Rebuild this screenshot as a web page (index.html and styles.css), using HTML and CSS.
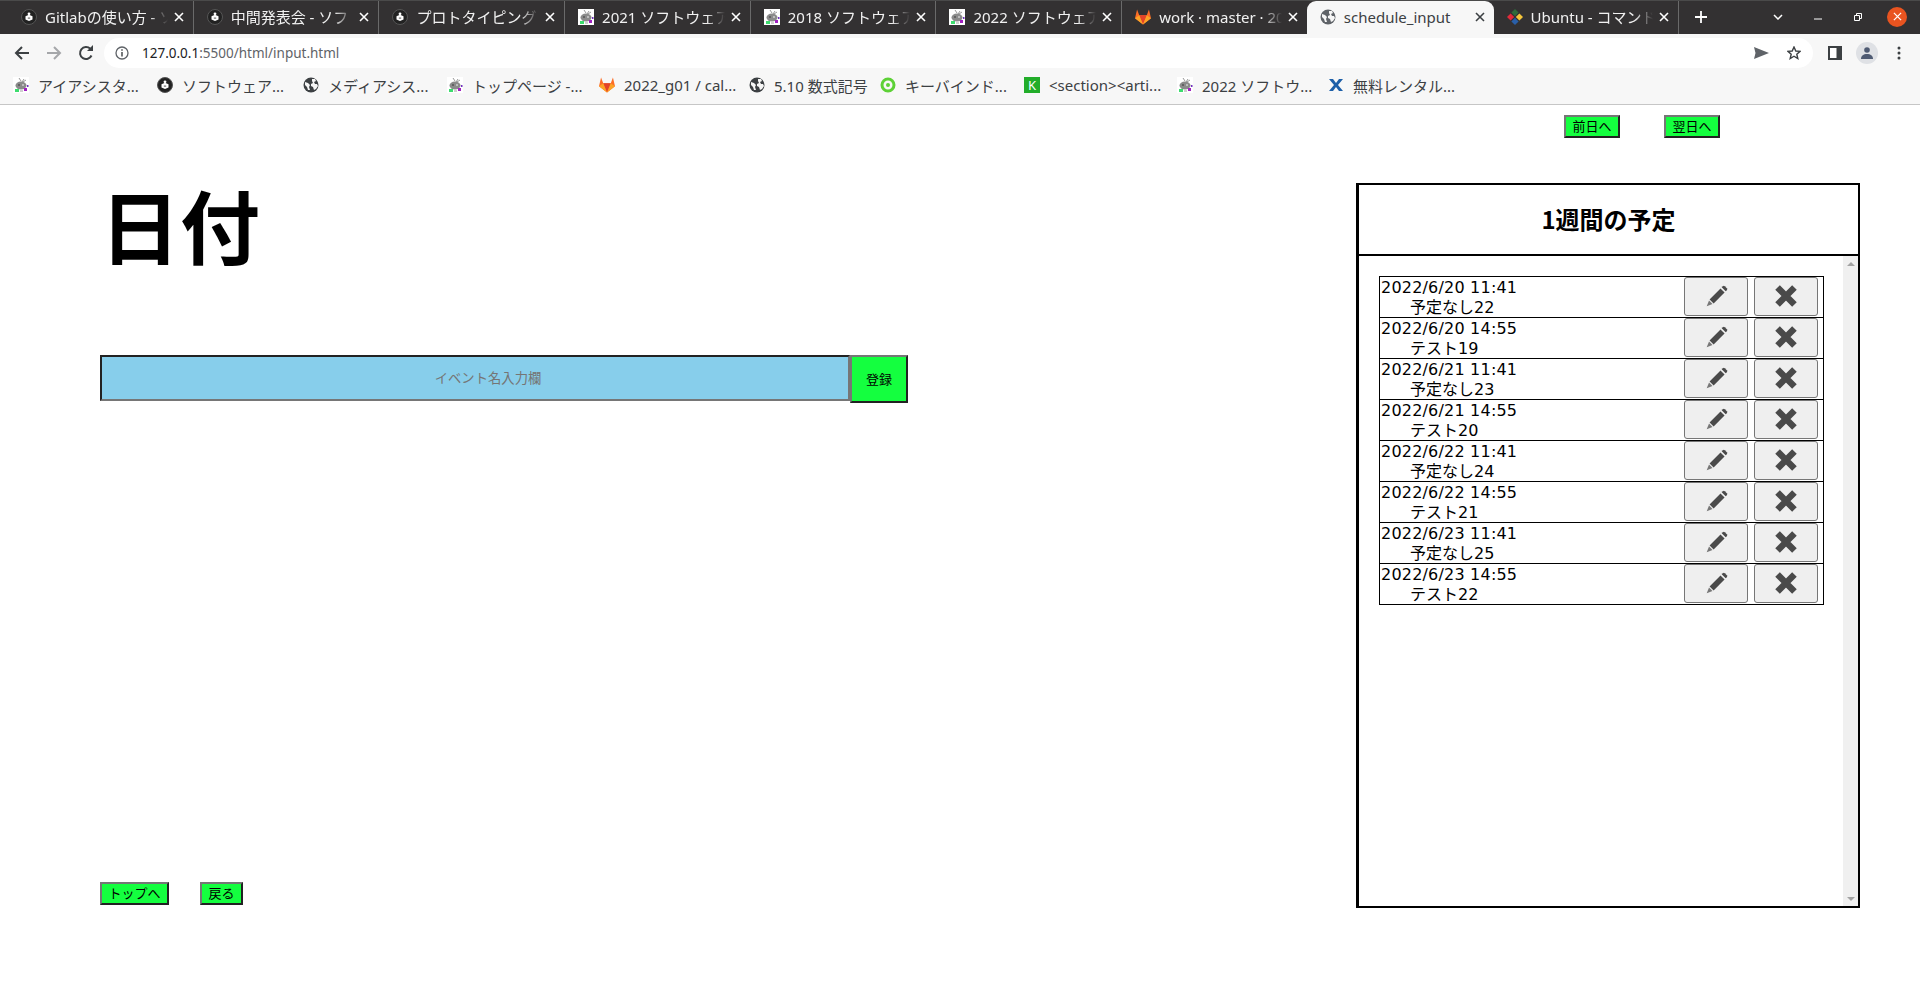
FILE: index.html
```html
<!DOCTYPE html>
<html lang="ja">
<head>
<meta charset="utf-8">
<title>schedule_input</title>
<link rel="stylesheet" href="styles.css">
</head>
<body>
<svg class="defs" width="0" height="0">
  <symbol id="i-robot" viewBox="0 0 16 16">
    <rect width="16" height="16" fill="#fff"/>
    <path d="M6 1l2 3M11 2l-2 3M13 3l-3 2" stroke="#999" stroke-width="1"/>
    <ellipse cx="8" cy="8.5" rx="5.5" ry="4" fill="#8a8a8a"/>
    <circle cx="6" cy="8" r="1" fill="#555"/><circle cx="10" cy="8" r="1" fill="#ccc"/>
    <rect x="2" y="12" width="4" height="3" fill="#3ddc6e"/>
    <rect x="7" y="13" width="3" height="2" fill="#d0d0d0"/>
    <rect x="11" y="11" width="3" height="3" fill="#a020c0"/>
    <rect x="14" y="8" width="1.5" height="2" fill="#7030c0"/>
  </symbol>
  <symbol id="i-gl" viewBox="0 0 16 16">
    <circle cx="8" cy="8" r="7.500" fill="#222" stroke="#555" stroke-width="1"/>
    <path d="M4.500 7.200L8 5.800l3.500 1.400v3.400L8 12l-3.500-1.400z" fill="#fff"/>
    <circle cx="8" cy="4.800" r="1.400" fill="#fff"/>
    <path d="M6.800 8.300h2.400v1.700H6.800z" fill="#999"/>
  </symbol>
  <symbol id="i-globe" viewBox="0 0 16 16">
    <circle cx="8" cy="8" r="7.500" fill="#3c4043"/>
    <path d="M2 5l3 1 2 2-1 2 1 3-2 0-1-3-2-2zM9 2l3 0 1 2-2 1 1 2 2 0 1 2-2 3-2 1-1-3-2-1 0-2 2-1-1-2z" fill="#f6f6f6"/>
  </symbol>
  <symbol id="i-globe-a" viewBox="0 0 16 16">
    <circle cx="8" cy="8" r="7.500" fill="#5f6368"/>
    <path d="M2 5l3 1 2 2-1 2 1 3-2 0-1-3-2-2zM9 2l3 0 1 2-2 1 1 2 2 0 1 2-2 3-2 1-1-3-2-1 0-2 2-1-1-2z" fill="#f6f6f6"/>
  </symbol>
  <symbol id="i-fox" viewBox="1 1.500 14 14">
    <path d="M8 15L1 9.500 2.800 2l1.900 5h6.600l1.900-5L15 9.500z" fill="#fc6d26"/>
    <path d="M8 15L4.700 7h6.600z" fill="#e24329"/>
    <path d="M8 15L1 9.500l3.700-2.500zM8 15l7-5.500-3.700-2.500z" fill="#fca326"/>
  </symbol>
  <symbol id="i-ring" viewBox="0 0 16 16">
    <circle cx="8" cy="8" r="6" fill="none" stroke="#5dd136" stroke-width="3"/>
    <circle cx="8" cy="8" r="2" fill="#5dd136"/>
  </symbol>
  <symbol id="i-x" viewBox="0 0 16 16">
    <path d="M1 2h4l3 4 3-4h4l-5 6 5 6h-4l-3-4-3 4H1l5-6z" fill="#1d5fa8"/>
  </symbol>
  <symbol id="i-diamond" viewBox="0 0 16 16">
    <path d="M8 0l3.600 3.600L8 7.200 4.400 3.600z" fill="#2f6b3a"/>
    <path d="M3.600 4.400L7.200 8l-3.600 3.600L0 8z" fill="#e02b3a"/>
    <path d="M12.400 4.400L16 8l-3.600 3.600L8.800 8z" fill="#f5c53a"/>
    <path d="M8 8.800l3.600 3.600L8 16l-3.600-3.600z" fill="#2a5fa8"/>
  </symbol>
  <symbol id="i-close" viewBox="0 0 10 10">
    <path d="M1 1l8 8M9 1l-8 8" stroke="currentColor" stroke-width="1.600" fill="none"/>
  </symbol>
  <symbol id="i-pencil" viewBox="0 0 20 20">
    <path fill="#4a4a4a" d="M4 12.500L13.500 3 17 6.500 7.500 16z"/>
    <path fill="#777" d="M3.500 13.500L6.500 16.500 1.500 18.500z"/>
    <path fill="#4a4a4a" d="M14.500 2L15.500 1Q16.300.3 17.200 1L19 2.800Q19.700 3.700 19 4.500L18 5.500z"/>
  </symbol>
  <symbol id="i-times" viewBox="0 0 20 20">
    <path d="M3.500 3.500L16.500 16.500M16.500 3.500L3.500 16.500" stroke="#4a4a4a" stroke-width="5" fill="none"/>
  </symbol>
</svg>

<header class="chrome">
  <div class="tabstrip">
    <div class="tab"><svg class="fav"><use href="#i-gl"/></svg><span class="tab-title">Gitlabの使い方 - ソ</span><svg class="tab-x"><use href="#i-close"/></svg></div>
    <div class="tab"><svg class="fav"><use href="#i-gl"/></svg><span class="tab-title">中間発表会 - ソフ</span><svg class="tab-x"><use href="#i-close"/></svg></div>
    <div class="tab"><svg class="fav"><use href="#i-gl"/></svg><span class="tab-title">プロトタイピング</span><svg class="tab-x"><use href="#i-close"/></svg></div>
    <div class="tab"><svg class="fav"><use href="#i-robot"/></svg><span class="tab-title">2021 ソフトウェア</span><svg class="tab-x"><use href="#i-close"/></svg></div>
    <div class="tab"><svg class="fav"><use href="#i-robot"/></svg><span class="tab-title">2018 ソフトウェア</span><svg class="tab-x"><use href="#i-close"/></svg></div>
    <div class="tab"><svg class="fav"><use href="#i-robot"/></svg><span class="tab-title">2022 ソフトウェア</span><svg class="tab-x"><use href="#i-close"/></svg></div>
    <div class="tab tab-nosep"><svg class="fav"><use href="#i-fox"/></svg><span class="tab-title">work · master · 20</span><svg class="tab-x"><use href="#i-close"/></svg></div>
    <div class="tab tab-active"><svg class="fav"><use href="#i-globe-a"/></svg><span class="tab-title">schedule_input</span><svg class="tab-x"><use href="#i-close"/></svg></div>
    <div class="tab"><svg class="fav"><use href="#i-diamond"/></svg><span class="tab-title">Ubuntu - コマンド</span><svg class="tab-x"><use href="#i-close"/></svg></div>
    <svg class="newtab" viewBox="0 0 12 12"><path d="M6 0v12M0 6h12" stroke="#fff" stroke-width="1.800"/></svg>
    <div class="winctl">
      <svg class="wc wc-chev" viewBox="0 0 10 6"><path d="M1 1l4 4 4-4" stroke="#fff" stroke-width="1.500" fill="none"/></svg>
      <svg class="wc wc-min" viewBox="0 0 8 2"><path d="M0 1h8" stroke="#fff" stroke-width="1"/></svg>
      <svg class="wc wc-max" viewBox="0 0 8 8"><path d="M.5 2.500h5v5h-5zM2.500 2.500v-2h5v5h-2" stroke="#fff" fill="none"/></svg>
      <span class="wc-close"><svg class="wc-close-x" viewBox="0 0 10 10"><path d="M1 1l8 8M9 1l-8 8" stroke="#fff" stroke-width="1.400"/></svg></span>
    </div>
  </div>
  <div class="toolbar">
    <svg class="nav-ic" viewBox="0 0 16 16"><path d="M15 8H2M8 2L2 8l6 6" stroke="#3c4043" stroke-width="2" fill="none"/></svg>
    <svg class="nav-ic" viewBox="0 0 16 16"><path d="M1 8h13M8 2l6 6-6 6" stroke="#a5a7aa" stroke-width="2" fill="none"/></svg>
    <svg class="nav-ic" viewBox="0 0 16 16"><path d="M13.500 10.500A6 6 0 1 1 12.300 3.800" stroke="#3c4043" stroke-width="2" fill="none"/><path d="M9 6h6V0z" fill="#3c4043"/></svg>
    <div class="omnibox">
      <svg class="info" viewBox="0 0 14 14"><circle cx="7" cy="7" r="6" fill="none" stroke="#5f6368" stroke-width="1.300"/><path d="M7 6v4.500M7 3.200v1.600" stroke="#3c4043" stroke-width="1.400"/></svg>
      <span class="url"><span class="url-host">127.0.0.1</span>:5500/html/input.html</span>
      <span class="omni-end">
        <svg class="send" viewBox="0 0 15 12"><path d="M0 0l15 6-15 6 1.500-6z" fill="#5f6368"/></svg>
        <svg class="star" viewBox="0 0 14 14"><path d="M7 1l1.800 4 4.200.4-3.200 2.800 1 4.300L7 10.200 3.200 12.500l1-4.300L1 5.400 5.200 5z" fill="none" stroke="#3c4043" stroke-width="1.400"/></svg>
      </span>
    </div>
    <svg class="side" viewBox="0 0 14 14"><path d="M0 0h14v14H0z" fill="#3c4043"/><path d="M2 2h6.500v10H2z" fill="#fff"/></svg>
    <span class="avatar"><svg class="avatar-ic" viewBox="0 0 12 12"><circle cx="6" cy="3" r="2.800" fill="#4f5b73"/><path d="M0 12c0-3.500 2.500-5 6-5s6 1.500 6 5z" fill="#4f5b73"/></svg></span>
    <svg class="dots" viewBox="0 0 4 14"><circle cx="2" cy="2" r="1.500" fill="#3c4043"/><circle cx="2" cy="7" r="1.500" fill="#3c4043"/><circle cx="2" cy="12" r="1.500" fill="#3c4043"/></svg>
  </div>
  <div class="bookmarks">
    <span class="bm"><svg class="fav"><use href="#i-robot"/></svg>アイアシスタ...</span>
    <span class="bm"><svg class="fav"><use href="#i-gl"/></svg>ソフトウェア...</span>
    <span class="bm"><svg class="fav"><use href="#i-globe"/></svg>メディアシス...</span>
    <span class="bm"><svg class="fav"><use href="#i-robot"/></svg>トップページ -...</span>
    <span class="bm"><svg class="fav"><use href="#i-fox"/></svg>2022_g01 / cal...</span>
    <span class="bm"><svg class="fav"><use href="#i-globe"/></svg>5.10 数式記号</span>
    <span class="bm"><svg class="fav"><use href="#i-ring"/></svg>キーバインド...</span>
    <span class="bm"><span class="k-ic">K</span>&lt;section&gt;&lt;arti...</span>
    <span class="bm"><svg class="fav"><use href="#i-robot"/></svg>2022 ソフトウ...</span>
    <span class="bm"><svg class="fav"><use href="#i-x"/></svg>無料レンタル...</span>
  </div>
</header>

<main class="page">
  <section class="left">
    <h1 class="date">日付</h1>
    <form class="event-form">
      <input class="event-input" type="text" placeholder="イベント名入力欄">
      <button class="btn btn-submit" type="button">登録</button>
    </form>
    <div class="bottom-nav">
      <button class="btn" type="button">トップへ</button>
      <button class="btn" type="button">戻る</button>
    </div>
  </section>
  <section class="right">
    <div class="day-nav">
      <button class="btn" type="button">前日へ</button>
      <button class="btn" type="button">翌日へ</button>
    </div>
    <div class="panel">
      <h2 class="panel-title">1週間の予定</h2>
      <div class="panel-body">
        <div class="panel-scroll">
          <ul class="events">
            <li class="event"><p class="event-text"><span class="event-time">2022/6/20 11:41</span><span class="event-name">予定なし22</span></p><button class="icon-btn" type="button"><svg class="pencil"><use href="#i-pencil"/></svg></button><button class="icon-btn" type="button"><svg class="times"><use href="#i-times"/></svg></button></li>
            <li class="event"><p class="event-text"><span class="event-time">2022/6/20 14:55</span><span class="event-name">テスト19</span></p><button class="icon-btn" type="button"><svg class="pencil"><use href="#i-pencil"/></svg></button><button class="icon-btn" type="button"><svg class="times"><use href="#i-times"/></svg></button></li>
            <li class="event"><p class="event-text"><span class="event-time">2022/6/21 11:41</span><span class="event-name">予定なし23</span></p><button class="icon-btn" type="button"><svg class="pencil"><use href="#i-pencil"/></svg></button><button class="icon-btn" type="button"><svg class="times"><use href="#i-times"/></svg></button></li>
            <li class="event"><p class="event-text"><span class="event-time">2022/6/21 14:55</span><span class="event-name">テスト20</span></p><button class="icon-btn" type="button"><svg class="pencil"><use href="#i-pencil"/></svg></button><button class="icon-btn" type="button"><svg class="times"><use href="#i-times"/></svg></button></li>
            <li class="event"><p class="event-text"><span class="event-time">2022/6/22 11:41</span><span class="event-name">予定なし24</span></p><button class="icon-btn" type="button"><svg class="pencil"><use href="#i-pencil"/></svg></button><button class="icon-btn" type="button"><svg class="times"><use href="#i-times"/></svg></button></li>
            <li class="event"><p class="event-text"><span class="event-time">2022/6/22 14:55</span><span class="event-name">テスト21</span></p><button class="icon-btn" type="button"><svg class="pencil"><use href="#i-pencil"/></svg></button><button class="icon-btn" type="button"><svg class="times"><use href="#i-times"/></svg></button></li>
            <li class="event"><p class="event-text"><span class="event-time">2022/6/23 11:41</span><span class="event-name">予定なし25</span></p><button class="icon-btn" type="button"><svg class="pencil"><use href="#i-pencil"/></svg></button><button class="icon-btn" type="button"><svg class="times"><use href="#i-times"/></svg></button></li>
            <li class="event"><p class="event-text"><span class="event-time">2022/6/23 14:55</span><span class="event-name">テスト22</span></p><button class="icon-btn" type="button"><svg class="pencil"><use href="#i-pencil"/></svg></button><button class="icon-btn" type="button"><svg class="times"><use href="#i-times"/></svg></button></li>
          </ul>
        </div>
        <div class="scrollbar"><span class="arrow-up"></span><span class="arrow-down"></span></div>
      </div>
    </div>
  </section>
</main>
</body>
</html>
```
FILE: styles.css
```css
* { box-sizing: border-box; }
html, body { margin: 0; padding: 0; height: 100%; }
body {
  background: #fff;
  color: #000;
  font-family: "DejaVu Sans", "Noto Sans CJK JP", sans-serif;
  overflow: hidden;
}
.defs { display: block; height: 0; }

/* browser chrome */
.chrome { font-family: "Noto Sans", "Noto Sans CJK JP", sans-serif; font-size: 15px; }
.tabstrip {
  display: flex;
  align-items: stretch;
  height: 34px;
  padding-left: 8px;
  background: #333132;
  border-top: 1px solid #4a4a4a;
}
.tab {
  flex: 0 0 185.7px;
  min-width: 0;
  display: flex;
  align-items: center;
  padding: 0 6px 2px 13px;
  color: #f1f1f1;
  border-right: 1px solid #6a6a6a;
}
.tab-nosep { border-right-color: transparent; }
.tab-active {
  background: #f7f7f7;
  color: #3c4043;
  border-radius: 9px 9px 0 0;
  border-right: 0;
  margin-left: -1px;
  flex-basis: 186.7px;
}
.fav { flex: none; width: 16px; height: 16px; }
.tab-title {
  flex: 1;
  min-width: 0;
  margin-left: 8px;
  white-space: nowrap;
  overflow: hidden;
  -webkit-mask-image: linear-gradient(90deg, #000 85%, transparent 100%);
  mask-image: linear-gradient(90deg, #000 85%, transparent 100%);
}
.tab-active .tab-title { -webkit-mask-image: none; mask-image: none; }
.tab-x { flex: none; width: 10px; height: 10px; margin-left: 6px; margin-right: 3px; color: #fff; }
.tab-active .tab-x { color: #3c4043; }
.newtab { flex: none; width: 12px; height: 12px; align-self: center; margin: 0 0 2px 16px; }
.winctl { flex: 1; display: flex; align-items: center; justify-content: flex-end; padding: 0 13px 2px 0; }
.wc { display: block; }
.wc-chev { width: 10px; height: 6px; margin-right: 31px; }
.wc-min { width: 8px; height: 2px; margin-right: 32px; margin-top: 5px; }
.wc-max { width: 8px; height: 8px; margin-right: 25px; }
.wc-close {
  display: flex;
  align-items: center;
  justify-content: center;
  width: 20px;
  height: 20px;
  border-radius: 50%;
  background: #e95420;
}
.wc-close-x { width: 9px; height: 9px; }

.toolbar {
  display: flex;
  align-items: center;
  height: 34px;
  padding: 4px 19px 0 14px;
  background: #f7f7f7;
}
.nav-ic { flex: none; width: 16px; height: 16px; margin-right: 16px; }
.omnibox {
  flex: 1;
  display: flex;
  align-items: center;
  height: 30px;
  margin-left: -6px;
  padding: 0 12px 0 11px;
  background: #fff;
  border-radius: 15px;
}
.info { width: 14px; height: 14px; margin-right: 13px; flex: none; }
.url { color: #5f6368; font-size: 13.5px; }
.url-host { color: #202124; }
.omni-end { margin-left: auto; display: flex; align-items: center; gap: 18px; }
.send { width: 15px; height: 12px; }
.star { width: 14px; height: 14px; }
.side { flex: none; width: 14px; height: 14px; margin-left: 15px; }
.avatar {
  flex: none;
  display: flex;
  align-items: center;
  justify-content: center;
  width: 22px;
  height: 22px;
  margin-left: 14px;
  border-radius: 50%;
  background: #dfe1e5;
}
.avatar-ic { width: 12px; height: 12px; }
.dots { flex: none; width: 4px; height: 14px; margin-left: 19px; }

.bookmarks {
  display: grid;
  grid-template-columns: 144px 146px 144px 152px 150px 131px 144px 153px 151px auto;
  align-items: center;
  height: 37px;
  padding: 0 0 2px 13px;
  background: #f7f7f7;
  border-bottom: 1px solid #c6c6c6;
  color: #3c4043;
}
.bm { display: flex; align-items: center; gap: 9px; white-space: nowrap; }
.k-ic {
  display: inline-flex;
  align-items: center;
  justify-content: center;
  width: 16px;
  height: 16px;
  background: #22ad2a;
  color: #fff;
  font-size: 13px;
}

/* page */
.page {
  display: grid;
  grid-template-columns: 1fr 504px;
  padding: 10px 60px 0 100px;
}
.left { display: flex; flex-direction: column; align-items: flex-start; }
.date {
  margin: 50px 0 0;
  font-family: "Noto Sans CJK JP", sans-serif;
  font-size: 80px;
  font-weight: 700;
  line-height: 116px;
}
.event-form { display: flex; align-items: flex-start; margin-top: 74px; }
.event-input {
  width: 750px;
  height: 46px;
  padding: 0 0 2px 26px;
  border: 2px solid;
  border-color: #222 #767676 #767676 #222;
  background: #87ceeb;
  font-family: "Noto Sans CJK JP", sans-serif;
  font-size: 13.33px;
  text-align: center;
  outline: 0;
}
.event-input::placeholder { color: #757575; opacity: 1; }
.btn {
  display: block;
  height: 23px;
  padding: 0 6.5px 2px;
  border: 2px solid;
  border-color: #767676 #222 #222 #767676;
  background: #14ff3f;
  color: #000;
  font-family: "Noto Sans CJK JP", sans-serif;
  font-size: 13px;
  line-height: 1;
}
.btn-submit { width: 58px; height: 48px; padding: 0 0 2px; }
.bottom-nav { display: flex; gap: 31px; margin-top: 479px; }

.right { display: flex; flex-direction: column; }
.day-nav { display: flex; gap: 44px; padding-left: 208px; }
.panel {
  display: flex;
  flex-direction: column;
  height: 725px;
  margin-top: 45px;
  border: 2px solid #000;
  border-left-width: 3px;
}
.panel-title {
  flex: none;
  height: 71px;
  margin: 0;
  border-bottom: 2px solid #000;
  font-family: "Noto Sans CJK JP", sans-serif;
  font-size: 24px;
  font-weight: 700;
  line-height: 68px;
  text-align: center;
}
.panel-body { flex: 1; min-height: 0; display: flex; }
.panel-scroll { flex: 1; min-width: 0; padding: 20px 19px 0 20px; }
.events { list-style: none; margin: 0; padding: 0; border: 1px solid #000; border-bottom: 0; }
.event {
  display: flex;
  align-items: flex-start;
  height: 41px;
  padding: 0 5px 0 0;
  gap: 6px;
  border-bottom: 1px solid #000;
}
.event-text {
  flex: 1;
  margin: 0;
  padding: 1px 0 0 1px;
  font-size: 16px;
  line-height: 20px;
  white-space: nowrap;
}
.event-time { display: block; letter-spacing: 0.2px; }
.event-name { display: block; padding-left: 29px; }
.icon-btn {
  display: flex;
  flex: none;
  align-items: center;
  justify-content: center;
  width: 64px;
  height: 39px;
  padding: 0 0 1px;
  border: 1px solid #767676;
  border-radius: 3px;
  background: #efefef;
}
.pencil { width: 23px; height: 23px; }
.times { width: 26px; height: 26px; }
.scrollbar {
  flex: none;
  display: flex;
  flex-direction: column;
  justify-content: space-between;
  align-items: center;
  width: 15px;
  padding: 6px 0 5px;
  background: #f0f0f0;
}
.arrow-up { border: 4px solid transparent; border-top: 0; border-bottom: 4px solid #a3a3a3; }
.arrow-down { border: 4px solid transparent; border-bottom: 0; border-top: 4px solid #a3a3a3; }
```
